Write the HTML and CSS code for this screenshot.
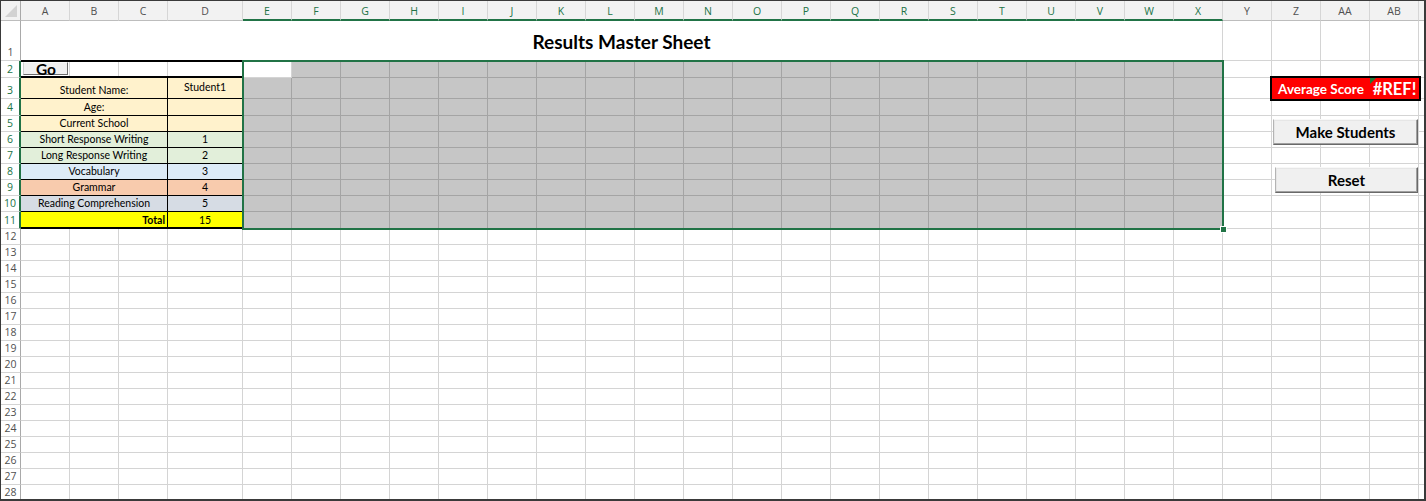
FILE: index.html
```html
<!DOCTYPE html>
<html lang="en">
<head>
<meta charset="utf-8">
<title>Results Master Sheet</title>
<link rel="stylesheet" href="styles.css">
</head>
<body>
<div class="sheet">
  <div class="corner"><svg width="19" height="19" viewBox="0 0 19 19"><polygon points="16,4 16,16 4,16" fill="#d2d2d2"/></svg></div>
  <div class="ch">A</div><div class="ch">B</div><div class="ch">C</div><div class="ch">D</div>
  <div class="ch sel">E</div><div class="ch sel">F</div><div class="ch sel">G</div><div class="ch sel">H</div>
  <div class="ch sel">I</div><div class="ch sel">J</div><div class="ch sel">K</div><div class="ch sel">L</div>
  <div class="ch sel">M</div><div class="ch sel">N</div><div class="ch sel">O</div><div class="ch sel">P</div>
  <div class="ch sel">Q</div><div class="ch sel">R</div><div class="ch sel">S</div><div class="ch sel">T</div>
  <div class="ch sel">U</div><div class="ch sel">V</div><div class="ch sel">W</div><div class="ch sel">X</div>
  <div class="ch">Y</div><div class="ch">Z</div><div class="ch">AA</div><div class="ch">AB</div>
  <div class="ch end"></div>

  <div class="vlines">
    <div></div><div></div><div></div><div></div><div></div><div></div><div></div><div></div>
    <div></div><div></div><div></div><div></div><div></div><div></div><div></div><div></div>
    <div></div><div></div><div></div><div></div><div></div><div></div><div></div><div></div>
    <div></div><div></div><div></div><div></div><div></div>
  </div>
  <div class="hlines">
    <div></div><div></div><div></div><div></div><div></div><div></div><div></div>
    <div></div><div></div><div></div><div></div><div></div><div></div><div></div>
    <div></div><div></div><div></div><div></div><div></div><div></div><div></div>
    <div></div><div></div><div></div><div></div><div></div><div></div><div></div>
  </div>

  <div class="title">Results Master Sheet</div>

  <div class="tbl">
    <div class="r2"><div class="go">Go</div></div>
    <div class="lab y">Student Name:</div><div class="val y mid">Student1</div>
    <div class="lab y">Age:</div><div class="val y"></div>
    <div class="lab y">Current School</div><div class="val y"></div>
    <div class="lab g">Short Response Writing</div><div class="val g">1</div>
    <div class="lab g">Long Response Writing</div><div class="val g">2</div>
    <div class="lab b">Vocabulary</div><div class="val b">3</div>
    <div class="lab o">Grammar</div><div class="val o">4</div>
    <div class="lab s">Reading Comprehension</div><div class="val s">5</div>
    <div class="lab t total">Total</div><div class="val t">15</div>
  </div>

  <div class="tint tint-top"></div>
  <div class="tint tint-main"></div>
  <div class="selbox"><span class="handle"></span></div>

  <div class="avg">
    <div class="avg-label">Average Score</div>
    <div class="avg-val"><i class="err"></i>#REF!</div>
  </div>

  <div class="btn make">Make Students</div>
  <div class="btn reset">Reset</div>

  <div class="rowheads">
    <div class="rh">1</div>
    <div class="rh sel">2</div><div class="rh sel">3</div><div class="rh sel">4</div><div class="rh sel">5</div>
    <div class="rh sel">6</div><div class="rh sel">7</div><div class="rh sel">8</div><div class="rh sel">9</div>
    <div class="rh sel">10</div><div class="rh sel">11</div>
    <div class="rh">12</div><div class="rh">13</div><div class="rh">14</div><div class="rh">15</div>
    <div class="rh">16</div><div class="rh">17</div><div class="rh">18</div><div class="rh">19</div>
    <div class="rh">20</div><div class="rh">21</div><div class="rh">22</div><div class="rh">23</div>
    <div class="rh">24</div><div class="rh">25</div><div class="rh">26</div><div class="rh">27</div>
    <div class="rh">28</div>
  </div>
</div>
</body>
</html>
```

FILE: styles.css
```css
* { box-sizing: border-box; }

body {
  margin: 0;
  background: #fff;
}

.sheet {
  width: 1426px;
  height: 501px;
  overflow: hidden;
  border: 1px solid #3a3a3a;
  border-right-width: 2px;
  border-bottom-width: 2px;
  background: #fff;
  display: grid;
  grid-template-columns: 20px repeat(3, 49px) 75px repeat(24, 49px) 1fr;
  grid-template-rows: 20px 40px 17px 21px 17px repeat(6, 16px) 17px repeat(17, 16px);
  font-family: "Lato", "Noto Sans", sans-serif;
  color: #000;
}

/* headers */
.corner, .ch { grid-row: 1; }

.corner {
  background: #f2f2f2;
  border-right: 1px solid #a9a9a9;
  border-bottom: 1px solid #bdbdbd;
}
.corner svg { display: block; }

.ch {
  background: #f2f2f2;
  border-right: 1px solid #d6d6d6;
  border-bottom: 1px solid #bdbdbd;
  color: #505050;
  font-family: "Open Sans", "Noto Sans", sans-serif;
  font-size: 10.5px;
  display: flex;
  align-items: center;
  justify-content: center;
  padding-top: 1px;
}
.ch.sel {
  color: #217346;
  border-bottom: 2px solid #217346;
}
.ch.end { border-right: 0; }

.rowheads {
  grid-column: 1;
  grid-row: 2 / -1;
  display: grid;
  grid-template-rows: subgrid;
}
.rh {
  background: #fff;
  border-bottom: 1px solid #d4d4d4;
  border-right: 1px solid #a9a9a9;
  color: #505050;
  font-family: "Open Sans", "Noto Sans", sans-serif;
  font-size: 10.5px;
  line-height: 13px;
  display: flex;
  align-items: flex-end;
  justify-content: center;
  padding-bottom: 1px;
}
.rh.sel {
  color: #217346;
  border-right: 2px solid #217346;
}

/* gridlines */
.vlines {
  grid-column: 2 / -1;
  grid-row: 2 / -1;
  display: grid;
  grid-template-columns: subgrid;
}
.vlines > div { border-right: 1px solid #d4d4d4; }
.vlines > div:last-child { border-right: 0; }

.hlines {
  grid-column: 2 / -1;
  grid-row: 2 / -1;
  display: grid;
  grid-template-rows: subgrid;
}
.hlines > div { border-bottom: 1px solid #d4d4d4; }

/* title */
.title {
  grid-column: 2 / 26;
  grid-row: 2;
  background: #fff;
  border-right: 1px solid #d4d4d4;
  display: flex;
  align-items: center;
  justify-content: center;
  font-weight: bold;
  font-size: 19px;
}

/* student table */
.tbl {
  grid-column: 2 / 6;
  grid-row: 3 / 13;
  display: grid;
  grid-template-columns: subgrid;
  grid-template-rows: subgrid;
  font-size: 10.5px;
}
.r2 {
  grid-column: 1 / -1;
  margin-top: -1px;
  border-top: 2px solid #000;
  border-bottom: 2px solid #000;
  display: flex;
  align-items: flex-start;
  padding-left: 2px;
}
.go {
  width: 45px;
  height: 13px;
  background: #f0f0f0;
  border: 1px solid;
  border-color: #fafafa #6d6d6d #6d6d6d #cfcfcf;
  font-weight: bold;
  font-size: 15.5px;
  line-height: 12px;
  text-align: center;
  overflow: visible;
  padding-left: 1px;
}

.lab, .val {
  border-right: 1px solid #000;
  border-bottom: 1px solid #000;
  display: flex;
  align-items: flex-end;
  justify-content: center;
  padding-bottom: 1px;
  line-height: 13px;
  white-space: nowrap;
}
.lab { grid-column: 1 / 4; }
.val { grid-column: 4; }
.val.mid { align-items: center; padding-bottom: 2px; }

.y { background: #fff2cc; }
.g { background: #e2efda; }
.b { background: #ddebf7; }
.o { background: #f8cbad; }
.s { background: #d6dce4; }
.t { background: #ffff00; border-bottom-width: 2px; padding-bottom: 0; }
.total {
  justify-content: flex-end;
  font-weight: bold;
  padding-right: 2px;
}

/* selection */
.tint { background: rgba(0, 0, 0, 0.224); }
.tint-top { grid-column: 7 / 26; grid-row: 3; }
.tint-main { grid-column: 6 / 26; grid-row: 4 / 13; }

.selbox {
  grid-column: 6 / 26;
  grid-row: 3 / 13;
  margin: -1px;
  border: 2px solid #217346;
  position: relative;
}
.handle {
  position: absolute;
  right: -5px;
  bottom: -5px;
  width: 7px;
  height: 7px;
  background: #217346;
  border: 1px solid #fff;
}

/* average score */
.avg {
  grid-column: 27 / 30;
  grid-row: 4;
  margin: -2px;
  border: 2px solid #000;
  background: #ff0000;
  color: #fff;
  font-weight: bold;
  display: grid;
  grid-template-columns: subgrid;
}
.avg-label {
  grid-column: 1 / 3;
  display: flex;
  align-items: center;
  justify-content: center;
  font-size: 13.5px;
  padding-top: 1px;
}
.avg-val {
  grid-column: 3;
  position: relative;
  display: flex;
  align-items: center;
  justify-content: center;
  font-size: 16.5px;
}
.err {
  position: absolute;
  top: 0;
  left: 0;
  width: 0;
  height: 0;
  border-top: 6px solid #1f7a37;
  border-right: 6px solid transparent;
}

/* buttons */
.btn {
  align-self: start;
  height: 26px;
  background: #f0f0f0;
  border: 1px solid;
  border-color: #f8f8f8 #696969 #696969 #b4b4b4;
  box-shadow: inset -1px -1px 0 #a0a0a0, inset 1px 1px 0 #e6e6e6;
  display: flex;
  align-items: center;
  justify-content: center;
  font-weight: bold;
  font-size: 15px;
}
.make {
  grid-column: 27 / 30;
  grid-row: 6 / 9;
  margin: 3px 1px 0 1px;
}
.reset {
  grid-column: 27 / 30;
  grid-row: 9 / 11;
  margin: 3px 1px 0 3px;
}
```
